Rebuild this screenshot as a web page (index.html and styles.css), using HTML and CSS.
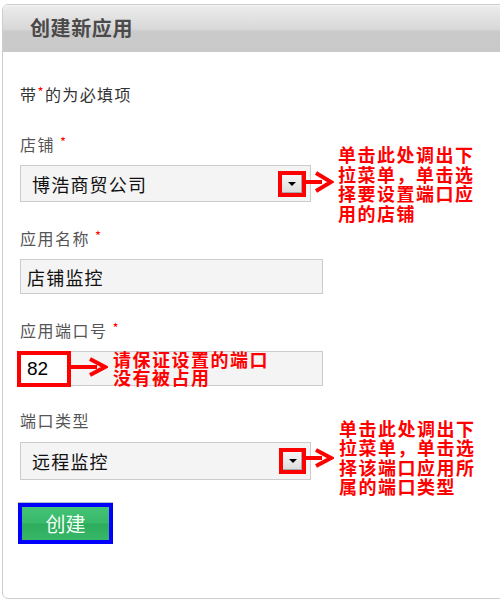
FILE: index.html
```html
<!DOCTYPE html>
<html lang="zh-CN">
<head>
<meta charset="utf-8">
<title>创建新应用</title>
<link rel="stylesheet" href="styles.css">
</head>
<body>
<div class="panel">
  <div class="header"><h1 class="title">创建新应用</h1></div>
  <div class="content">
    <p class="note">带<span class="star">*</span>的为必填项</p>

    <div class="field f1">
      <div class="label">店铺 <span class="star">*</span></div>
      <div class="row">
        <div class="select">
          <span class="value">博浩商贸公司</span>
          <span class="drop"><span class="tri"></span></span>
        </div>
        <svg class="arrow a1" width="28" height="22" viewBox="0 0 28 22"><rect x="0" y="9" width="16" height="4" fill="#f00"/><polyline points="10,2 25,11 10,20" fill="none" stroke="#f00" stroke-width="4" stroke-linejoin="miter"/></svg>
        <div class="callout c1">单击此处调出下<br>拉菜单，单击选<br>择要设置端口应<br>用的店铺</div>
      </div>
    </div>

    <div class="field f2">
      <div class="label">应用名称 <span class="star">*</span></div>
      <div class="input"><span class="value">店铺监控</span></div>
    </div>

    <div class="field f3">
      <div class="label">应用端口号 <span class="star">*</span></div>
      <div class="input">
        <span class="hl">82</span>
        <svg class="arrow a3" width="37" height="20" viewBox="0 0 37 20"><rect x="0" y="8" width="26" height="4" fill="#f00"/><polyline points="19,2 34,10 19,18" fill="none" stroke="#f00" stroke-width="4" stroke-linejoin="miter"/></svg>
        <div class="callout c3">请保证设置的端口<br>没有被占用</div>
      </div>
    </div>

    <div class="field f4">
      <div class="label">端口类型</div>
      <div class="row">
        <div class="select s4">
          <span class="value">远程监控</span>
          <span class="drop"><span class="tri"></span></span>
        </div>
        <svg class="arrow a2" width="30" height="20" viewBox="0 0 30 20"><rect x="0" y="8" width="18" height="4" fill="#f00"/><polyline points="12,2 27,10 12,18" fill="none" stroke="#f00" stroke-width="4" stroke-linejoin="miter"/></svg>
        <div class="callout c2">单击此处调出下<br>拉菜单，单击选<br>择该端口应用所<br>属的端口类型</div>
      </div>
    </div>

    <div class="btn-wrap"><button class="btn">创建</button></div>
  </div>
</div>
</body>
</html>
```

FILE: styles.css
```css
html, body {
  margin: 0;
  padding: 0;
}
body {
  width: 500px;
  height: 602px;
  overflow: hidden;
  background: #fff;
  font-family: "Noto Sans CJK SC", "Noto Sans", sans-serif;
}
.panel {
  margin: 4px 0 0 2px;
  width: 530px;
  height: 595px;
  box-sizing: border-box;
  border: 1px solid #cdcdcd;
  border-radius: 6px;
  background: #fff;
}
.header {
  display: flex;
  align-items: center;
  height: 47px;
  padding-left: 27px;
  border-top: 1px solid #f4f4f4;
  box-sizing: border-box;
  border-radius: 5px 5px 0 0;
  background: linear-gradient(#ececec 0%, #d8d8d8 50%, #cacaca 56%, #c9c9c9 100%);
}
.title {
  margin: 0 0 3px 0;
  font-size: 20px;
  line-height: 24px;
  font-weight: 700;
  color: #4a4a4a;
  letter-spacing: 0.6px;
}
.content {
  padding: 32px 0 0 17px;
}
.note {
  margin: 0;
  font-size: 16px;
  line-height: 20px;
  color: #333;
  letter-spacing: 1.4px;
}
.star {
  color: #f00;
  font-size: 13px;
  vertical-align: top;
  line-height: 16px;
}
.label {
  font-size: 16px;
  line-height: 20px;
  color: #555;
  letter-spacing: 1.5px;
  margin-bottom: 11px;
}
.f1 { margin-top: 30px; }
.f2 { margin-top: 26px; }
.f3 { margin-top: 26px; }
.f4 { margin-top: 24px; }
.f4 .label { margin-bottom: 12px; }
.row {
  display: flex;
  align-items: center;
}
.select {
  display: flex;
  align-items: center;
  width: 291px;
  height: 37px;
  box-sizing: border-box;
  border: 1px solid #cccccc;
  background: #f4f4f4;
  padding-left: 11px;
}
.s4 { height: 38px; }
.value {
  font-size: 18px;
  color: #111;
  letter-spacing: 1.2px;
}
.drop {
  margin-left: auto;
  margin-right: 4px;
  width: 28px;
  height: 26px;
  box-sizing: border-box;
  border: 4px solid #ff0000;
  background: linear-gradient(#f6f6f6, #dcdcdc);
  box-shadow: inset -1px -1px 0 #a8a8a8;
  display: flex;
  align-items: center;
  justify-content: center;
}
.s4 .drop { width: 27px; }
.tri {
  width: 0;
  height: 0;
  border-left: 4px solid transparent;
  border-right: 4px solid transparent;
  border-top: 4px solid #000;
}
.arrow { flex: none; display: block; }
.a1 { margin-left: -5px; margin-top: -3px; }
.a2 { margin-left: -7px; margin-top: -6px; }
.callout {
  color: #ff0000;
  font-weight: 700;
  font-size: 18px;
  letter-spacing: 1.5px;
  line-height: 19.5px;
  white-space: nowrap;
}
.c1 { margin: -20px 0 -21px 4px; }
.c2 { margin: -24px 0 -17px 5px; }
.input {
  display: flex;
  align-items: center;
  width: 303px;
  height: 35px;
  box-sizing: border-box;
  border: 1px solid #cccccc;
  background: #f4f4f4;
  padding-left: 6px;
}
.f3 .input { padding-left: 0; }
.hl {
  flex: none;
  margin-left: -4px;
  width: 54px;
  height: 36px;
  box-sizing: border-box;
  border: 4px solid #ff0000;
  background: #fff;
  padding-left: 6px;
  font-family: "Liberation Sans", Arial, sans-serif;
  font-size: 19px;
  line-height: 28px;
  color: #000;
}
.a3 { margin-top: -3px; }
.c3 {
  margin-left: 5px;
  line-height: 17.5px;
}
.btn-wrap {
  margin: 23px 0 0 -2px;
  width: 95px;
  height: 41px;
  box-sizing: border-box;
  border: 4px solid #0000ff;
  box-shadow: 0 -1px 0 #b4bcc6;
}
.btn {
  display: block;
  width: 87px;
  height: 33px;
  margin: 0;
  padding: 0;
  border: 0;
  background: linear-gradient(#43c476 0%, #38b869 48%, #2eab5d 52%, #36b867 100%);
  color: #f4fff6;
  font-family: "Noto Sans CJK SC", sans-serif;
  font-size: 20px;
  line-height: 33px;
  letter-spacing: 0;
}
```
